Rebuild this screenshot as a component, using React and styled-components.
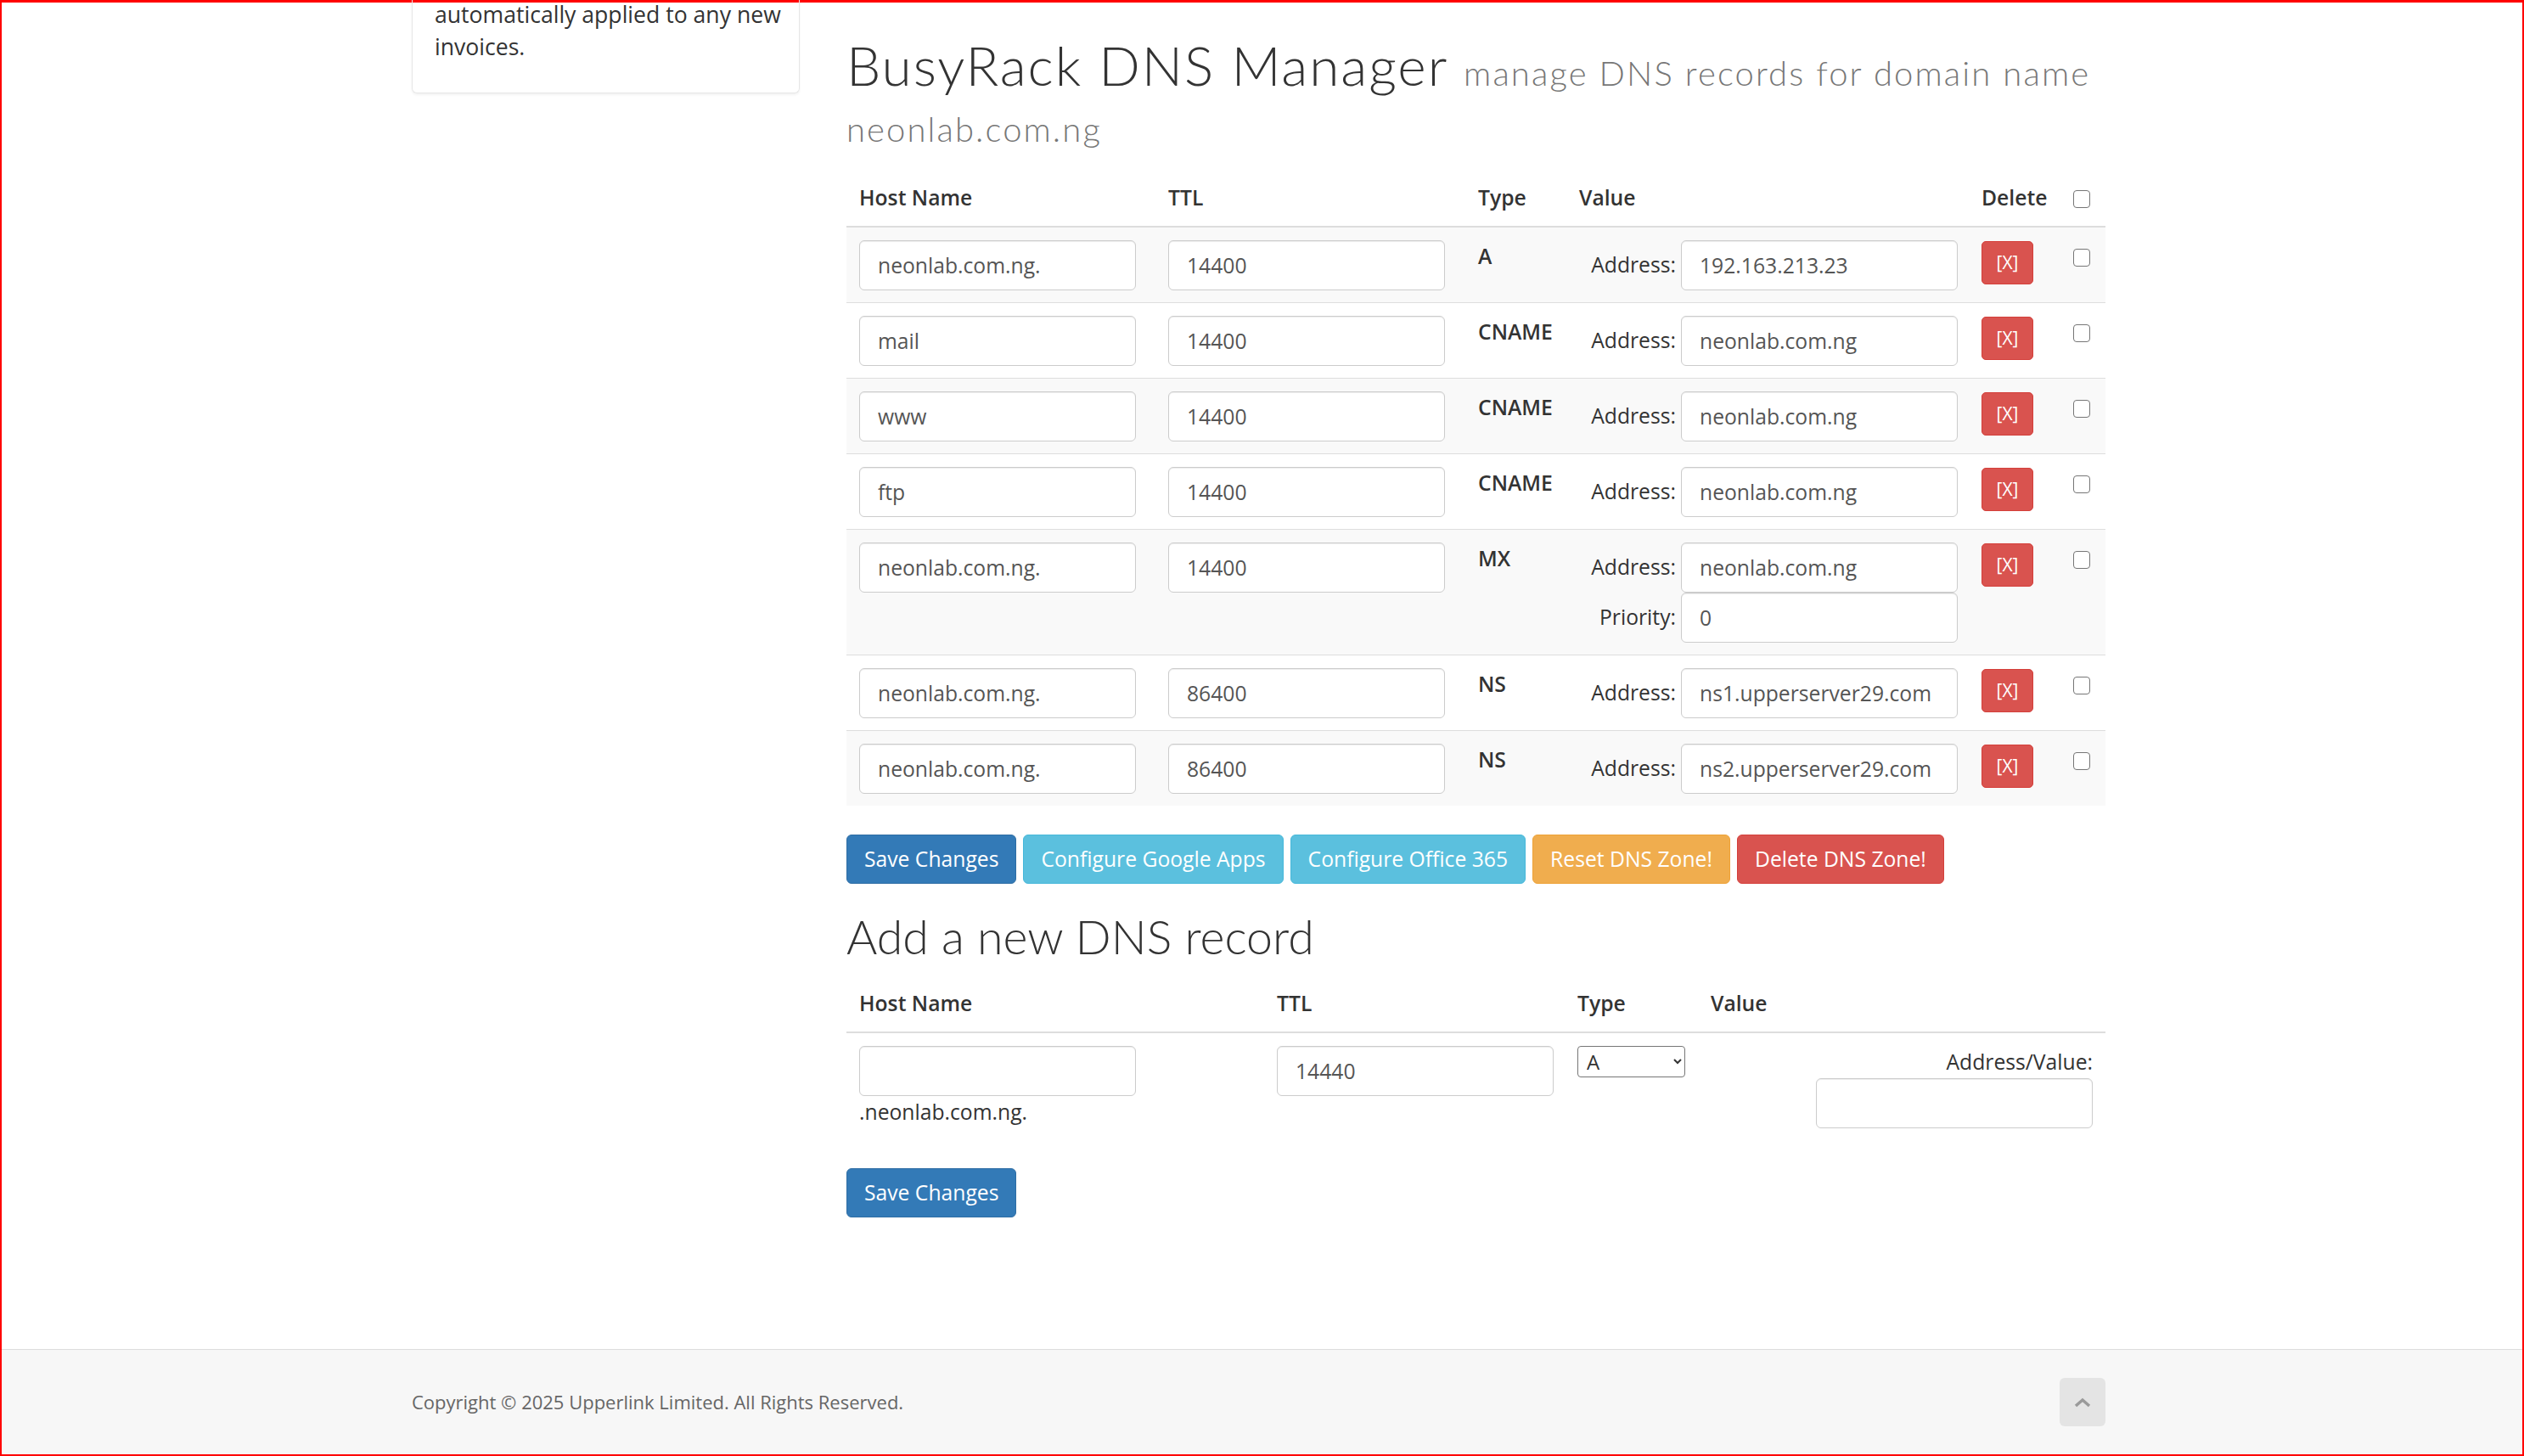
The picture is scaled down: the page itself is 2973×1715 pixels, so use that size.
import styled, { createGlobalStyle } from 'styled-components'

const GlobalStyle = createGlobalStyle`
  * {
    box-sizing: border-box;
  }
  html, body {
    margin: 0;
    padding: 0;
    overflow: hidden;
  }
  body {
    font-family: 'Open Sans', 'Noto Sans', sans-serif;
    font-size: 26.6px;
    line-height: 1.42857;
    color: #333;
    background: #fff;
  }
`

const Frame = styled.div`
  height: 100vh;
  border: 2px solid #ff0000;
  border-top-width: 3px;
  display: flex;
  flex-direction: column;
`

const Container = styled.div`
  width: 1995px;
  margin-left: calc(50% - 1001.5px);
`

const Body = styled(Container)`
  flex: 1;
  display: flex;
  gap: 55px;
  align-items: flex-start;
`

const Sidebar = styled.aside`
  width: 457px;
  flex: none;
`

const Card = styled.div`
  margin-top: -4px;
  padding: 0 16px 34px 26px;
  border: 1px solid #e6e6e6;
  border-top: 0;
  border-radius: 0 0 6px 6px;
  box-shadow: 0 2px 3px rgba(0, 0, 0, 0.05);
  color: #333;
`

const Main = styled.main`
  flex: 1;
  min-width: 0;
`

const PageTitle = styled.h1`
  margin: 41px 0 23px;
  font-family: Lato, 'Open Sans', sans-serif;
  font-weight: 300;
  font-size: 64px;
  line-height: 66px;
  letter-spacing: 1.9px;
  color: #333;

  small {
    font-size: 40px;
    line-height: 0;
    letter-spacing: 2.1px;
    color: #777;
  }
`

const Table = styled.table`
  width: 100%;
  table-layout: fixed;
  border-collapse: collapse;
  border-spacing: 0;
  margin-bottom: ${(p) => p.$gap}px;
  font-size: 24.7px;

  th, td {
    padding: 14.5px 15px;
    vertical-align: top;
    text-align: left;
    line-height: 38px;
  }

  th {
    font-weight: 600;
    border-bottom: 2px solid #ddd;
  }

  td {
    border-top: 1px solid #ddd;
  }
`

const Row = styled.tr`
  background: ${(p) => (p.$striped ? '#f9f9f9' : 'transparent')};
`

const TypeCell = styled.td`
  font-weight: 600;
`

const RightCell = styled.td`
  && {
    text-align: right;
  }
`

const TextInput = styled.input`
  display: block;
  width: 326px;
  height: 59px;
  padding: 0 21px;
  font-family: inherit;
  font-size: 24.7px;
  color: #555;
  background: #fff;
  border: 1px solid #ccc;
  border-radius: 6px;
  box-shadow: inset 0 1px 1px rgba(0, 0, 0, 0.075);
  outline: none;
`

const ValueGrid = styled.div`
  display: grid;
  grid-template-columns: auto 326px;
  justify-content: end;
  align-items: center;
  column-gap: 6px;
  margin-right: -2px;
`

const FieldLabel = styled.label`
  text-align: right;
`

const Check = styled.input.attrs({ type: 'checkbox' })`
  appearance: none;
  display: block;
  width: 20px;
  height: 21px;
  margin: 10px 0 0 -2px;
  background: #fff;
  border: 1.5px solid #767676;
  border-radius: 4px;
`

const DeleteButton = styled.button`
  display: block;
  width: 61px;
  height: 51px;
  margin-top: 1px;
  padding: 0;
  font-family: inherit;
  font-size: 21px;
  color: #fff;
  background: #d9534f;
  border: 1px solid #d43f3a;
  border-radius: 5px;
`

const Actions = styled.div`
  display: flex;
  gap: 8px;
`

const palette = {
  primary: ['#337ab7', '#2e6da4'],
  info: ['#5bc0de', '#46b8da'],
  warning: ['#f0ad4e', '#eea236'],
  danger: ['#d9534f', '#d43f3a'],
}

const Button = styled.button`
  height: 58px;
  padding: 0 20px;
  font-family: inherit;
  font-size: 24.7px;
  line-height: 38px;
  color: #fff;
  background: ${(p) => palette[p.$variant][0]};
  border: 1px solid ${(p) => palette[p.$variant][1]};
  border-radius: 6px;
  white-space: nowrap;
`

const SectionTitle = styled.h2`
  margin: 30px 0 14px;
  font-family: Lato, 'Open Sans', sans-serif;
  font-weight: 300;
  font-size: 55.5px;
  line-height: 63px;
  color: #333;
`

const Suffix = styled.div`
  color: #333;
`

const TypeSelect = styled.select`
  display: block;
  width: 127px;
  height: 37px;
  padding: 0 6px;
  font-family: inherit;
  font-size: 24px;
  color: #333;
  background: #fff;
  border: 1px solid #767676;
  border-radius: 4px;
`

const BlockInput = styled(TextInput)`
  margin-left: auto;
`

const Footer = styled.footer`
  flex: none;
  height: 124px;
  background: #f7f7f7;
  border-top: 1px solid #ddd;
  display: flex;
  align-items: center;
`

const FooterInner = styled(Container)`
  display: flex;
  justify-content: space-between;
  align-items: center;
`

const Copyright = styled.p`
  margin: 0;
  font-size: 22px;
  color: #666;
`

const TopButton = styled.button`
  width: 54px;
  height: 57px;
  padding: 0;
  display: flex;
  align-items: center;
  justify-content: center;
  background: #e4e4e4;
  border: 0;
  border-radius: 6px;
`

const records = [
  { host: 'neonlab.com.ng.', ttl: '14400', type: 'A', address: '192.163.213.23' },
  { host: 'mail', ttl: '14400', type: 'CNAME', address: 'neonlab.com.ng' },
  { host: 'www', ttl: '14400', type: 'CNAME', address: 'neonlab.com.ng' },
  { host: 'ftp', ttl: '14400', type: 'CNAME', address: 'neonlab.com.ng' },
  { host: 'neonlab.com.ng.', ttl: '14400', type: 'MX', address: 'neonlab.com.ng', priority: '0' },
  { host: 'neonlab.com.ng.', ttl: '86400', type: 'NS', address: 'ns1.upperserver29.com' },
  { host: 'neonlab.com.ng.', ttl: '86400', type: 'NS', address: 'ns2.upperserver29.com' },
]

export default function App() {
  return (
    <Frame>
      <GlobalStyle />
      <Body>
        <Sidebar>
          <Card>automatically applied to any new invoices.</Card>
        </Sidebar>
        <Main>
          <PageTitle>
            BusyRack DNS Manager{' '}
            <small>
              manage DNS records for domain name
              <br />
              neonlab.com.ng
            </small>
          </PageTitle>

          <Table $gap={34}>
            <colgroup>
              <col style={{ width: 364 }} />
              <col style={{ width: 365 }} />
              <col style={{ width: 119 }} />
              <col style={{ width: 474 }} />
              <col style={{ width: 110 }} />
              <col style={{ width: 51 }} />
            </colgroup>
            <thead>
              <tr>
                <th>Host Name</th>
                <th>TTL</th>
                <th>Type</th>
                <th>Value</th>
                <th>Delete</th>
                <th><Check /></th>
              </tr>
            </thead>
            <tbody>
              {records.map((r, i) => (
                <Row key={i} $striped={i % 2 === 0}>
                  <td><TextInput defaultValue={r.host} /></td>
                  <td><TextInput defaultValue={r.ttl} /></td>
                  <TypeCell>{r.type}</TypeCell>
                  <td>
                    <ValueGrid>
                      <FieldLabel>Address:</FieldLabel>
                      <TextInput defaultValue={r.address} />
                      {r.priority !== undefined && (
                        <>
                          <FieldLabel>Priority:</FieldLabel>
                          <TextInput defaultValue={r.priority} />
                        </>
                      )}
                    </ValueGrid>
                  </td>
                  <td><DeleteButton>[X]</DeleteButton></td>
                  <td><Check /></td>
                </Row>
              ))}
            </tbody>
          </Table>

          <Actions>
            <Button $variant="primary">Save Changes</Button>
            <Button $variant="info">Configure Google Apps</Button>
            <Button $variant="info">Configure Office 365</Button>
            <Button $variant="warning">Reset DNS Zone!</Button>
            <Button $variant="danger">Delete DNS Zone!</Button>
          </Actions>

          <SectionTitle>Add a new DNS record</SectionTitle>

          <Table $gap={33}>
            <colgroup>
              <col style={{ width: 492 }} />
              <col style={{ width: 354 }} />
              <col style={{ width: 157 }} />
              <col style={{ width: 480 }} />
            </colgroup>
            <thead>
              <tr>
                <th>Host Name</th>
                <th>TTL</th>
                <th>Type</th>
                <th>Value</th>
              </tr>
            </thead>
            <tbody>
              <tr>
                <td>
                  <TextInput defaultValue="" />
                  <Suffix>.neonlab.com.ng.</Suffix>
                </td>
                <td><TextInput defaultValue="14440" /></td>
                <td>
                  <TypeSelect defaultValue="A">
                    <option>A</option>
                    <option>AAAA</option>
                    <option>MX</option>
                    <option>CNAME</option>
                    <option>SPF</option>
                    <option>TXT</option>
                  </TypeSelect>
                </td>
                <RightCell>
                  Address/Value:
                  <BlockInput defaultValue="" />
                </RightCell>
              </tr>
            </tbody>
          </Table>

          <Button $variant="primary">Save Changes</Button>
        </Main>
      </Body>
      <Footer>
        <FooterInner>
          <Copyright>Copyright © 2025 Upperlink Limited. All Rights Reserved.</Copyright>
          <TopButton aria-label="Back to top">
            <svg width="22" height="14" viewBox="0 0 22 14" fill="none">
              <polyline points="3,11 11,4 19,11" stroke="#9a9a9a" strokeWidth="3.5" />
            </svg>
          </TopButton>
        </FooterInner>
      </Footer>
    </Frame>
  )
}
